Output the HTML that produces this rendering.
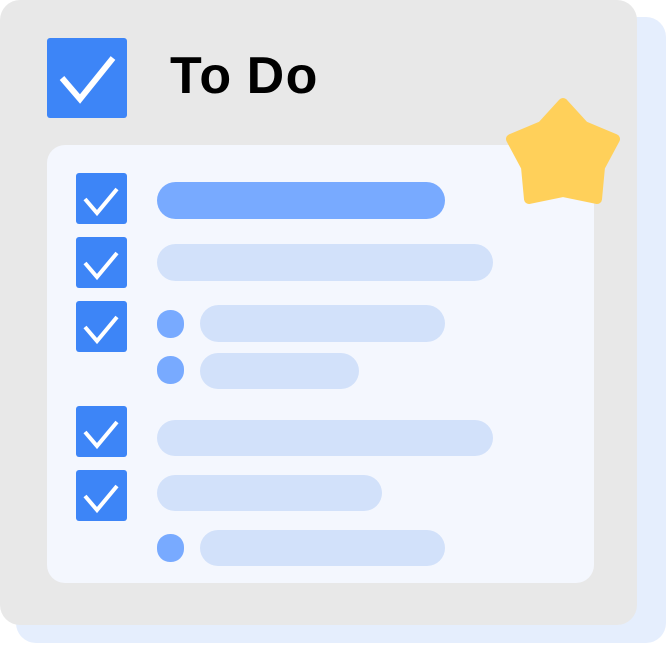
<!DOCTYPE html>
<html><head><style>
body{margin:0;width:666px;height:645px;background:#fff;position:relative;overflow:hidden;font-family:"Liberation Sans",sans-serif}
div{position:absolute;box-sizing:border-box}
.back{left:16px;top:17px;width:650px;height:626px;background:#e5eefd;border-radius:20px}
.card{left:0;top:0;width:637px;height:625px;background:#e8e8e8;border-radius:20px}
.panel{left:47px;top:145px;width:547px;height:438px;background:#f4f7fe;border-radius:18px}
.cb{background:#3d85f7;border-radius:3px}
.bar{border-radius:19px;background:#d2e1fa}
.dot{width:27px;height:28px;border-radius:13px;background:#78aaff}
.title{left:170px;top:46px;font-size:52px;font-weight:bold;color:#000;letter-spacing:1.5px;word-spacing:-2px;line-height:60px}
</style></head><body>
<div class="back"></div>
<div class="card"></div>
<div class="cb" style="left:47px;top:38px;width:80px;height:80px"><svg width="80" height="80"><path d="M15 40 L33 61 L66 20" stroke="#fff" stroke-width="6" fill="none"/></svg></div>
<div class="title">To Do</div>
<div class="panel"></div>
<div class="cb" style="left:76px;top:173px;width:51px;height:51px"><svg width="51" height="51"><path d="M9 26 L21 40 L41 16" stroke="#fff" stroke-width="4" fill="none"/></svg></div>
<div class="cb" style="left:76px;top:237px;width:51px;height:51px"><svg width="51" height="51"><path d="M9 26 L21 40 L41 16" stroke="#fff" stroke-width="4" fill="none"/></svg></div>
<div class="cb" style="left:76px;top:301px;width:51px;height:51px"><svg width="51" height="51"><path d="M9 26 L21 40 L41 16" stroke="#fff" stroke-width="4" fill="none"/></svg></div>
<div class="cb" style="left:76px;top:406px;width:51px;height:51px"><svg width="51" height="51"><path d="M9 26 L21 40 L41 16" stroke="#fff" stroke-width="4" fill="none"/></svg></div>
<div class="cb" style="left:76px;top:470px;width:51px;height:51px"><svg width="51" height="51"><path d="M9 26 L21 40 L41 16" stroke="#fff" stroke-width="4" fill="none"/></svg></div>
<div class="bar" style="left:157px;top:182px;width:288px;height:37px;background:#78aaff"></div>
<div class="bar" style="left:157px;top:244px;width:336px;height:37px"></div>
<div class="dot" style="left:157px;top:310px"></div>
<div class="bar" style="left:200px;top:305px;width:245px;height:37px"></div>
<div class="dot" style="left:157px;top:356px"></div>
<div class="bar" style="left:200px;top:353px;width:159px;height:36px"></div>
<div class="bar" style="left:157px;top:420px;width:336px;height:36px"></div>
<div class="bar" style="left:157px;top:475px;width:225px;height:36px"></div>
<div class="dot" style="left:157px;top:534px"></div>
<div class="bar" style="left:200px;top:530px;width:245px;height:36px"></div>
<svg style="position:absolute;left:0;top:0" width="666" height="645"><polygon points="563,103 584,126 615,139 600,167 597,199 563,192 529,199 526,167 511,139 542,126" fill="#ffd05a" stroke="#ffd05a" stroke-width="10" stroke-linejoin="round"/></svg>
</body></html>
